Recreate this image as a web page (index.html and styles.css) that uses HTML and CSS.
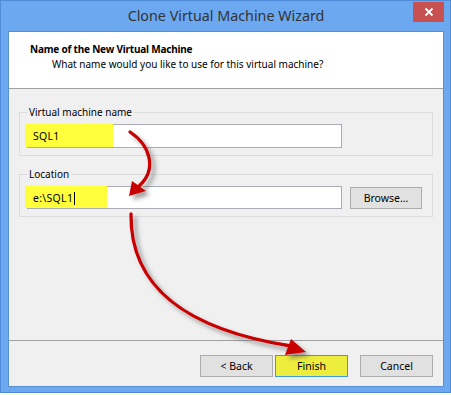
FILE: index.html
```html
<!DOCTYPE html>
<html lang="en">
<head>
  <meta charset="UTF-8">
  <title>Clone Virtual Machine Wizard</title>
  <link rel="stylesheet" href="styles.css">
</head>
<body>

  <div class="window">
    <div class="titlebar">
      <span class="title">Clone Virtual Machine Wizard</span>
      <div class="close">
        <svg width="12" height="10" viewBox="0 0 12 10"><path d="M2.5 1.5 L9.5 8.5 M9.5 1.5 L2.5 8.5" stroke="#fff" stroke-width="1.8"/></svg>
      </div>
    </div>

    <div class="client">
      <div class="header">
        <h1>Name of the New Virtual Machine</h1>
        <p>What name would you like to use for this virtual machine?</p>
      </div>

      <div class="content">
        <fieldset class="group">
          <legend>Virtual machine name</legend>
          <div class="field name-field">
            <span class="mark mark-name"></span>
            <span class="value">SQL1</span>
          </div>
        </fieldset>

        <fieldset class="group">
          <legend>Location</legend>
          <div class="row">
            <div class="field">
              <span class="mark mark-loc"></span>
              <span class="value">e:\SQL1<i class="caret"></i></span>
            </div>
            <button class="btn browse">Browse...</button>
          </div>
        </fieldset>
      </div>

      <div class="footer">
        <button class="btn">&lt; Back</button>
        <button class="btn finish">Finish</button>
        <button class="btn cancel">Cancel</button>
      </div>
    </div>

    <!-- callout arrows drawn over the dialog -->
    <svg class="arrows" width="451" height="395" viewBox="0 0 451 395">
      <defs>
        <filter id="shadow" x="-20%" y="-20%" width="140%" height="140%">
          <feDropShadow dx="4" dy="4" stdDeviation="2.2" flood-color="#555" flood-opacity="0.55"/>
        </filter>
      </defs>
      <g filter="url(#shadow)" fill="none" stroke="#c80000" stroke-width="3.3" stroke-linecap="round">
        <path d="M130,132 C151,146 157,170 139,186"/>
        <path d="M131,214 C130,290 190,330 291,346"/>
      </g>
      <g filter="url(#shadow)" fill="#c80000">
        <polygon points="129,196 132,181 146,191"/>
        <polygon points="306,352 291,339 285,355"/>
      </g>
    </svg>
  </div>

</body>
</html>
```

FILE: styles.css
```css
body {
  margin: 0;
  background: #fff;
  font-family: "Noto Sans", "Open Sans", sans-serif;
  font-size: 10px;
  color: #000;
}
.window {
  position: relative;
  width: 436px;
  height: 391px;
  background: #6ba8f0;
  border: 1px solid #4f8bd6;
  display: flex;
  flex-direction: column;
  padding: 0 6px 0 7px;
}
.titlebar {
  height: 30px;
  display: flex;
  align-items: center;
  justify-content: center;
}
.title {
  font-size: 14.3px;
  color: #333;
  margin-top: -1px;
}
.close {
  position: absolute;
  top: 1px;
  right: 6px;
  width: 31px;
  height: 20px;
  background: #c75050;
  display: flex;
  align-items: center;
  justify-content: center;
}
.client {
  flex: 1;
  margin-bottom: 5px;
  background: #f0f0f0;
  border: 1px solid #5a8fd0;
  display: flex;
  flex-direction: column;
}
.header {
  background: #fff;
  height: 57px;
  border-bottom: 1px solid #a0a0a0;
  box-sizing: border-box;
  padding: 10px 0 0 21px;
}
.header h1 {
  margin: 0;
  font-size: 10px;
  font-weight: bold;
  letter-spacing: -0.2px;
  line-height: 15px;
}
.header p {
  margin: 0;
  padding-left: 22px;
  line-height: 15px;
}
.content {
  flex: 1;
  padding: 16px 10px 0 10px;
  display: flex;
  flex-direction: column;
  gap: 11px;
}
.group {
  margin: 0;
  border: 1px solid #dcdcdc;
  padding: 5px 7px 7px 7px;
}
.group legend {
  padding: 0 2px;
  line-height: 14px;
}
.row {
  display: flex;
  gap: 8px;
  align-items: center;
}
.field {
  position: relative;
  width: 313px;
  height: 21px;
  border: 1px solid #abadb3;
  background: #fff;
  display: flex;
  align-items: center;
}
.name-field {
  height: 22px;
}
.mark {
  position: absolute;
  left: -3px;
  top: -1px;
  bottom: 0;
  background: #ffff3c;
}
.mark-name {
  width: 88px;
}
.mark-loc {
  width: 82px;
}
.value {
  position: relative;
  padding-left: 5px;
  font-size: 10.5px;
  letter-spacing: 0.3px;
}
.caret {
  display: inline-block;
  width: 1px;
  height: 13px;
  background: #000;
  vertical-align: -3px;
  margin-left: 1px;
}
.btn {
  font-family: inherit;
  font-size: 10.5px;
  width: 73px;
  height: 22px;
  background: #e1e1e1;
  border: 1px solid #adadad;
  padding: 0;
  color: #000;
}
.browse {
  width: 72px;
}
.footer {
  height: 46px;
  border-top: 1px solid #a0a0a0;
  display: flex;
  justify-content: flex-end;
  align-items: flex-start;
  padding: 14px 10px 0 0;
  box-sizing: border-box;
  gap: 2px;
}
.finish {
  background: #eded3e;
  border-color: #3c9ae8;
}
.cancel {
  margin-left: 10px;
}
.arrows {
  position: absolute;
  left: -1px;
  top: -1px;
  pointer-events: none;
}
```
